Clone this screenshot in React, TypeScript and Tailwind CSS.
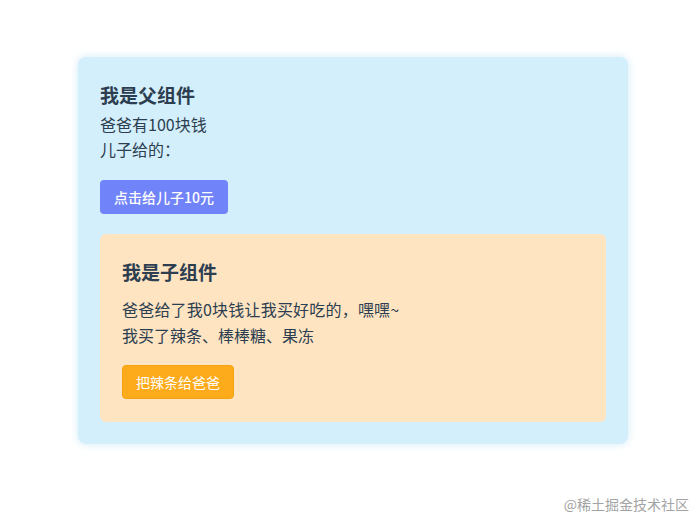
import React, { useState } from "react";

const font = {
  fontFamily: '"Microsoft YaHei", "Noto Sans CJK SC", sans-serif',
};

function Child({ money, onGive }: { money: number; onGive: () => void }) {
  return (
    <div className="mt-5 rounded-md bg-[#ffe4c2] px-[22px] pt-[26px] pb-[23px]">
      <h3 className="text-[19px] leading-6 font-bold">我是子组件</h3>
      <p className="mt-3 text-base leading-[26px] tracking-[0.2px]">
        爸爸给了我{money}块钱让我买好吃的，嘿嘿~
      </p>
      <p className="text-base leading-[26px]">我买了辣条、棒棒糖、果冻</p>
      <button
        className="mt-[17px] h-[34px] w-[112px] rounded border border-[#f5a20f] bg-[#fdab1a] text-sm text-white"
        onClick={onGive}
      >
        把辣条给爸爸
      </button>
    </div>
  );
}

export default function App() {
  const [money, setMoney] = useState(100);
  const [given, setGiven] = useState(0);
  const [gift, setGift] = useState("");

  return (
    <div className="relative h-[518px] w-full bg-white text-[#2c3e50]" style={font}>
      <div className="ml-[78px] pt-[57px]">
        <div className="w-[550px] rounded-lg bg-[#d4effc] px-[22px] pt-[26px] pb-[22px] shadow-[0_0_8px_rgba(180,220,245,0.6)]">
          <h3 className="text-[19px] leading-6 font-bold">我是父组件</h3>
          <p className="mt-[5px] text-base leading-[25px]">爸爸有{money}块钱</p>
          <p className="text-base leading-[25px]">儿子给的：{gift}</p>
          <button
            className="mt-[18px] h-[34px] w-[128px] rounded bg-[#7083f8] text-sm font-medium text-white"
            onClick={() => {
              setMoney(money - 10);
              setGiven(given + 10);
            }}
          >
            点击给儿子10元
          </button>
          <Child money={given} onGive={() => setGift("辣条")} />
        </div>
      </div>
      <span className="absolute right-[6px] bottom-[4px] text-sm leading-5 text-[#a3a3a3]">
        @稀土掘金技术社区
      </span>
    </div>
  );
}
